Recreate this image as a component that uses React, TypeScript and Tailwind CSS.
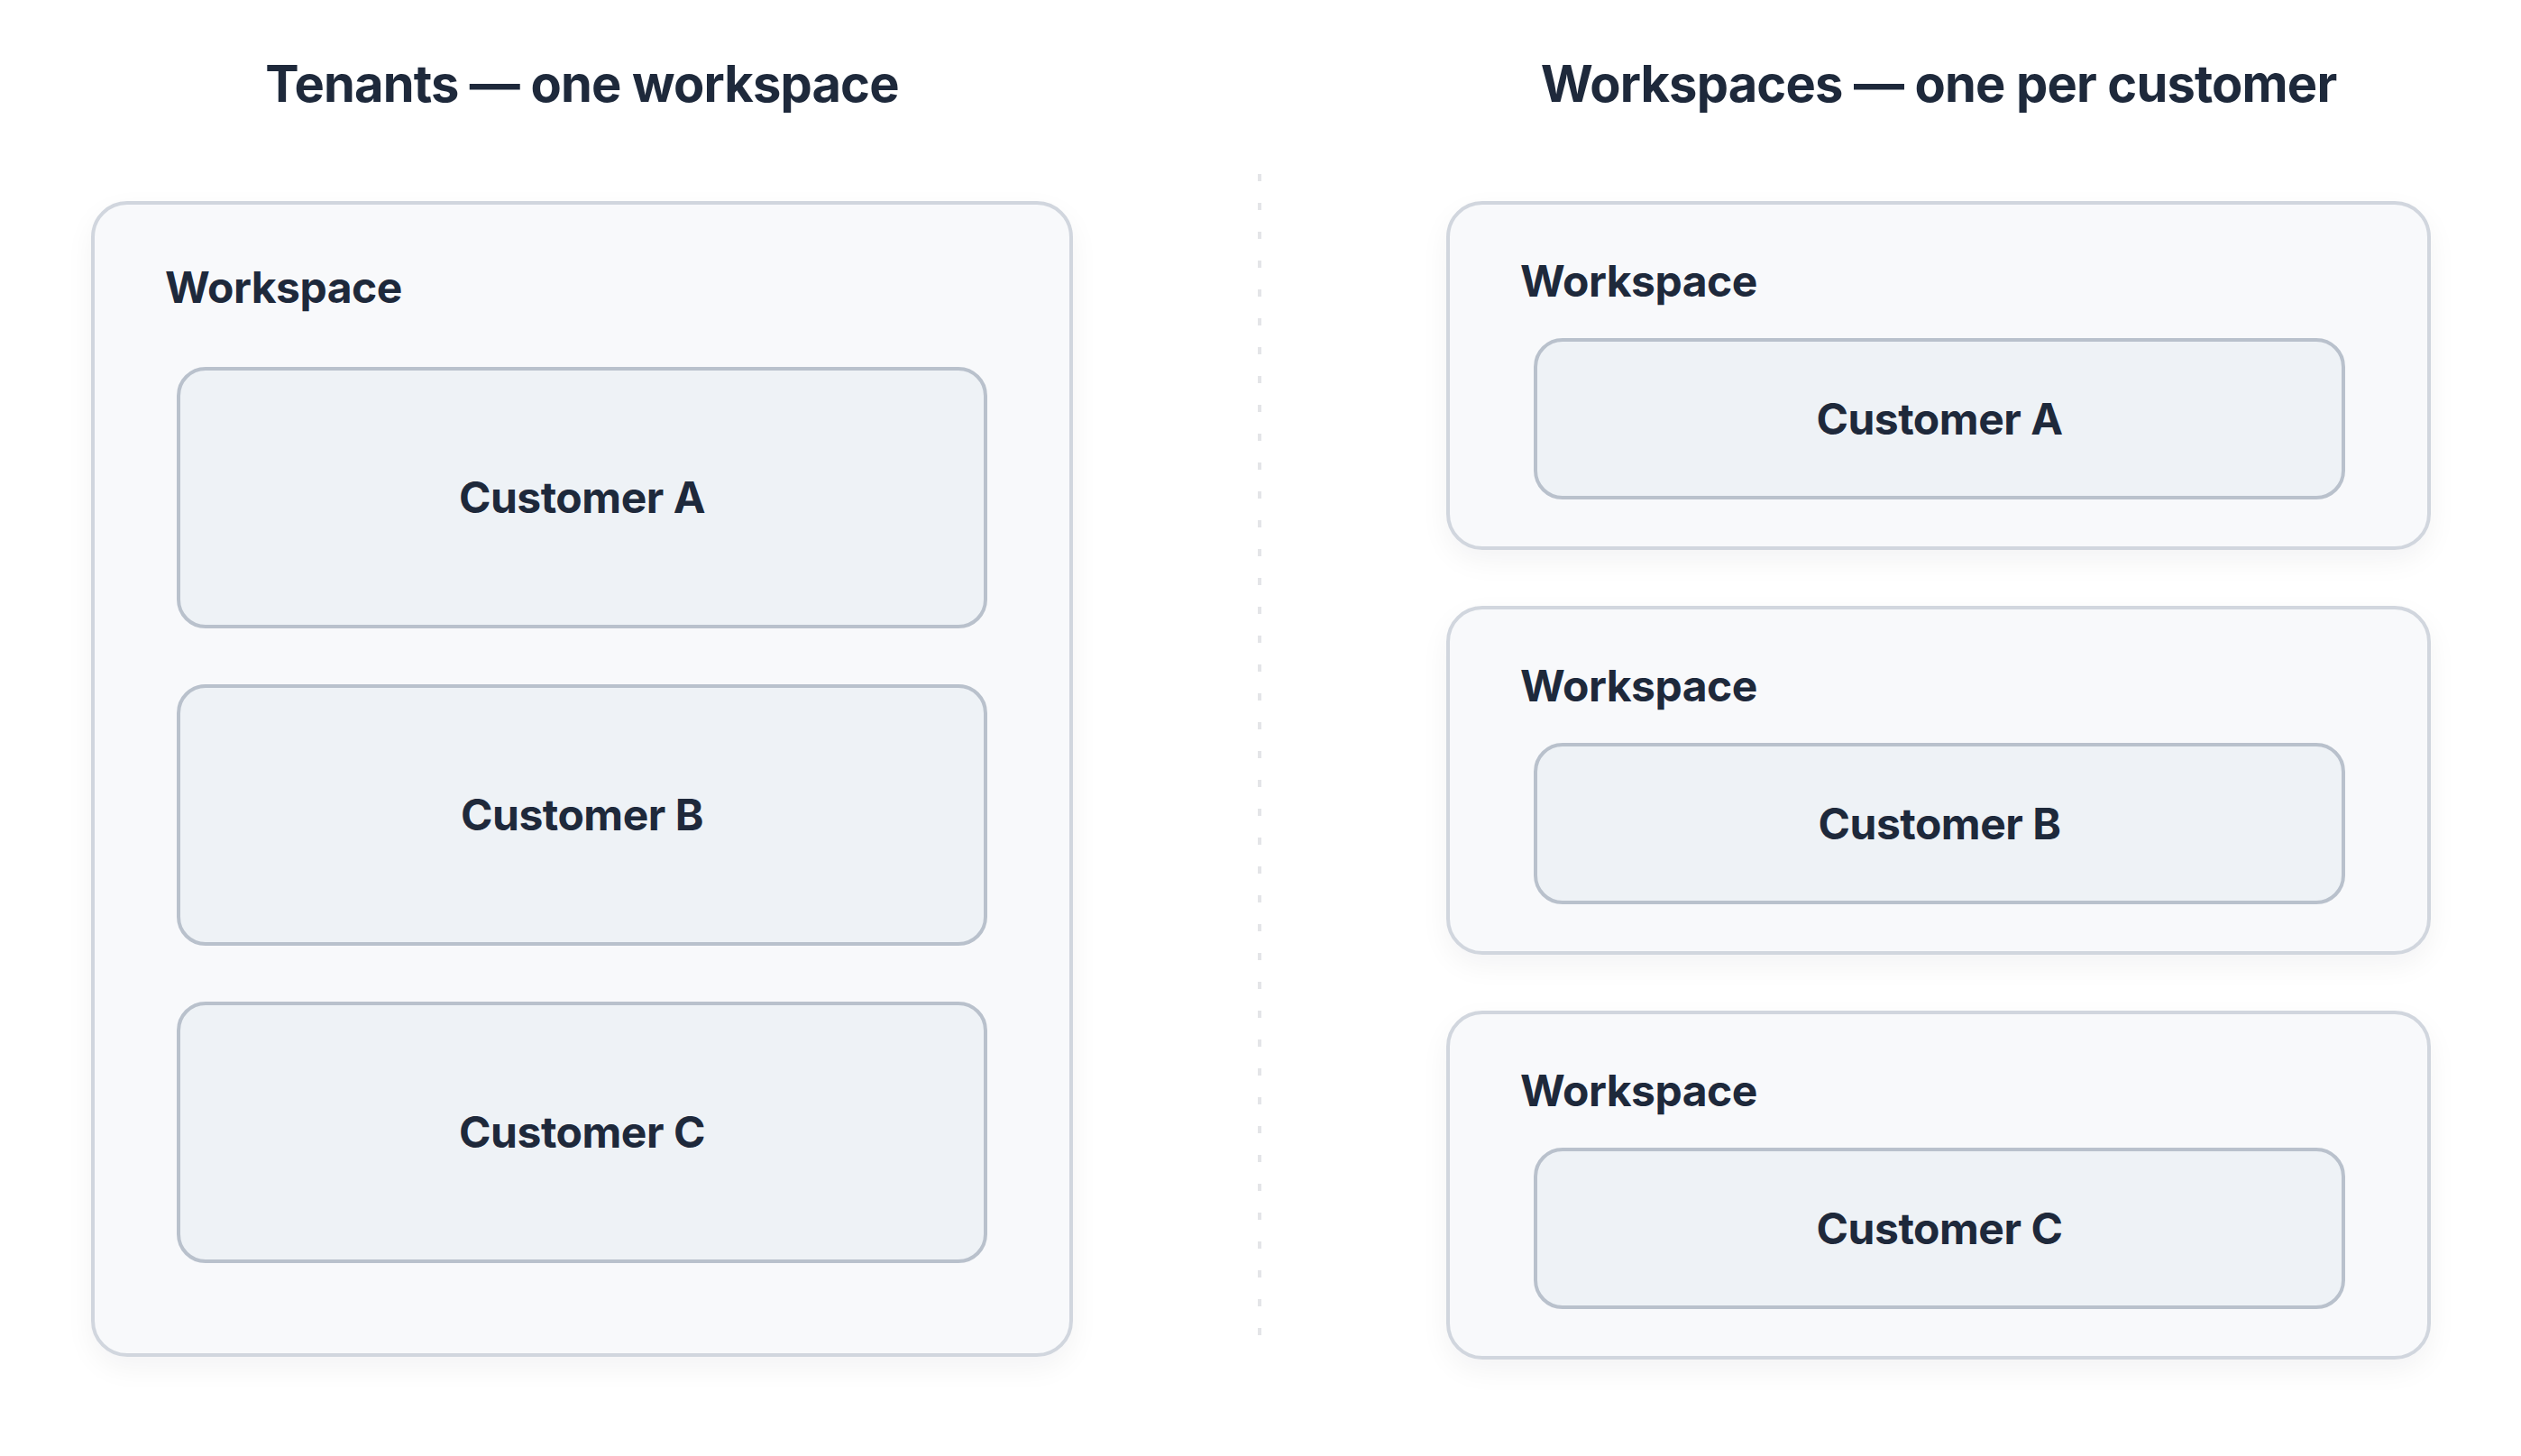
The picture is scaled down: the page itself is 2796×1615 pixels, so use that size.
const customers = ["Customer A", "Customer B", "Customer C"];

function CustomerBox({ name, tall }: { name: string; tall?: boolean }) {
  return (
    <div
      className={`flex items-center justify-center rounded-[32px] border-4 border-[#b9c1cc] bg-[#eef2f6] ${
        tall ? "h-[290px]" : "h-[179px]"
      }`}
    >
      <span className="text-[48px] leading-[48px] font-bold tracking-[-0.01em]">{name}</span>
    </div>
  );
}

function Heading({ children }: { children: string }) {
  return (
    <h2 className="text-center text-[56px] leading-[56px] font-bold tracking-[-0.015em]">{children}</h2>
  );
}

export default function App() {
  return (
    <main
      className="min-h-screen bg-white text-[#1e293b]"
      style={{ fontFamily: "Inter, 'Noto Sans', sans-serif" }}
    >
      <div className="grid grid-cols-[1089px_4px_1092px] gap-x-[205px] px-[101px] pt-[65px]">
        {/* Left: tenants inside one workspace */}
        <section>
          <Heading>Tenants — one workspace</Heading>
          <div className="mt-[102px] rounded-[40px] border-4 border-[#d1d6de] bg-[#f8f9fb] px-[78px] pt-[68px] pb-[100px] shadow-[0_12px_32px_rgba(15,23,42,0.05)]">
            <div className="text-[48px] leading-[48px] font-bold tracking-[-0.01em]">Workspace</div>
            <div className="mt-[64px] flex flex-col gap-[62px] px-[13px]">
              {customers.map((c) => (
                <CustomerBox key={c} name={c} tall />
              ))}
            </div>
          </div>
        </section>

        {/* Divider */}
        <div className="mt-[128px] h-[1288px] bg-[repeating-linear-gradient(to_bottom,#e4e5e8_0px,#e4e5e8_8px,transparent_8px,transparent_32px)]" />

        {/* Right: one workspace per customer */}
        <section>
          <Heading>Workspaces — one per customer</Heading>
          <div className="mt-[102px] flex flex-col gap-[62px]">
            {customers.map((c) => (
              <div
                key={c}
                className="rounded-[40px] border-4 border-[#d1d6de] bg-[#f8f9fb] px-[78px] pt-[61px] pb-[52px] shadow-[0_12px_32px_rgba(15,23,42,0.05)]"
              >
                <div className="text-[48px] leading-[48px] font-bold tracking-[-0.01em]">Workspace</div>
                <div className="mt-[39px] pl-[15px] pr-[13px]">
                  <CustomerBox name={c} />
                </div>
              </div>
            ))}
          </div>
        </section>
      </div>
    </main>
  );
}
